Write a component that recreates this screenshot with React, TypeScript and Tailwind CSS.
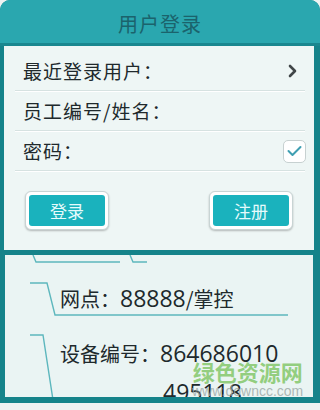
import { ReactNode } from 'react';

/* ── Small pieces ──────────────────────────────────────── */

function Row({ children, divider = true }: { children: ReactNode; divider?: boolean }) {
  return (
    <div className="relative h-[40px] flex items-center pl-[19px]">
      {children}
      {divider && (
        <div className="absolute left-[11px] right-[9px] bottom-0 h-px bg-[#d6e2e1] shadow-[0_1px_0_#ffffff]" />
      )}
    </div>
  );
}

function DialogButton({ label }: { label: string }) {
  return (
    <div className="w-[84px] h-[39px] p-[3px] rounded-[6px] bg-white border border-[#c8d4d4] shadow-[0_1px_2px_rgba(0,0,0,0.25)]">
      <div className="h-full rounded-[3px] bg-[#1ab2bd] flex items-center justify-center text-[17px] text-[#e6fbfc]">
        {label}
      </div>
    </div>
  );
}

export default function App() {
  return (
    <div className="relative w-[320px] h-[410px] overflow-hidden bg-[#eef2f2] font-['Noto_Sans_CJK_SC',sans-serif] text-[#20292c]">
      {/* Login dialog */}
      <div className="bg-[#15838a] rounded-t-[10px] pl-[4px] pr-[6px] pb-[5px]">
        <div className="-ml-[4px] -mr-[6px] h-[46px] pt-[5px] rounded-t-[10px] bg-[#2aa7af] border-b-[3px] border-[#1a878f] flex items-center justify-center">
          <span className="text-[20px] leading-none text-[#1b636c] tracking-[1px]">用户登录</span>
        </div>

        <div className="h-[204px] bg-[#eef6f5] pt-[5px]">
          <Row>
            <span className="text-[19px] tracking-[1px]">最近登录用户：</span>
            <svg className="ml-auto mr-[17px]" width="9" height="14" viewBox="0 0 9 14">
              <path d="M2 2 L7 7 L2 12" fill="none" stroke="#404648" strokeWidth="2.6" strokeLinecap="round" strokeLinejoin="round" />
            </svg>
          </Row>
          <Row>
            <span className="text-[19px] tracking-[1px]">员工编号/姓名：</span>
          </Row>
          <Row>
            <span className="text-[19px] tracking-[1px]">密码：</span>
            <div className="ml-auto mr-[8px] w-[23px] h-[23px] rounded-[5px] bg-white border border-[#c7d1d1] flex items-center justify-center">
              <svg width="15" height="12" viewBox="0 0 15 12">
                <path d="M1.5 6 L5.5 10 L13.5 2" fill="none" stroke="#3f9fb2" strokeWidth="2" strokeLinecap="round" strokeLinejoin="round" />
              </svg>
            </div>
          </Row>

          <div className="mt-[20px] px-[21px] flex justify-between">
            <DialogButton label="登录" />
            <DialogButton label="注册" />
          </div>
        </div>
      </div>

      {/* Info page behind the dialog */}
      <div className="bg-[#15838a] px-[5px] pb-[6px] pr-[7px]">
        <div className="relative h-[142px] overflow-hidden bg-[#eaf4f3]">
          <svg className="absolute inset-0" width="308" height="142" viewBox="0 0 308 142">
            <g fill="none" stroke="#5db7bd" strokeWidth="1.4">
              <path d="M28 0 L31 7 L115 7" />
              <path d="M125 0 L128 7 L142 7" />
              <path d="M25 28 L42 28 L50 60 L283 60" />
              <path d="M25 80 L38 80 L48 145" />
            </g>
          </svg>

          <div className="relative pl-[55px] pt-[29px] leading-[28px]">
            <div className="text-[20px]">
              网点：<span className="font-['Open_Sans',sans-serif] text-[23px]">88888</span>/掌控
            </div>
            <div className="mt-[26px] text-[20px]">
              设备编号：<span className="font-['Open_Sans',sans-serif] text-[23px]">864686010</span>
            </div>
            <div className="mt-[10px] pl-[103px] font-['Open_Sans',sans-serif] text-[23px]">495118</div>
          </div>
        </div>
      </div>

      {/* Watermark */}
      <div className="absolute left-[192px] top-[360px] flex flex-col items-center leading-none">
        <span className="text-[22px] font-bold text-[#84c76a]/85">绿色资源网</span>
        <span className="mt-[2px] font-['Liberation_Sans',sans-serif] text-[14px] text-[#9aa7a4]/80">www.downcc.com</span>
      </div>
    </div>
  );
}
